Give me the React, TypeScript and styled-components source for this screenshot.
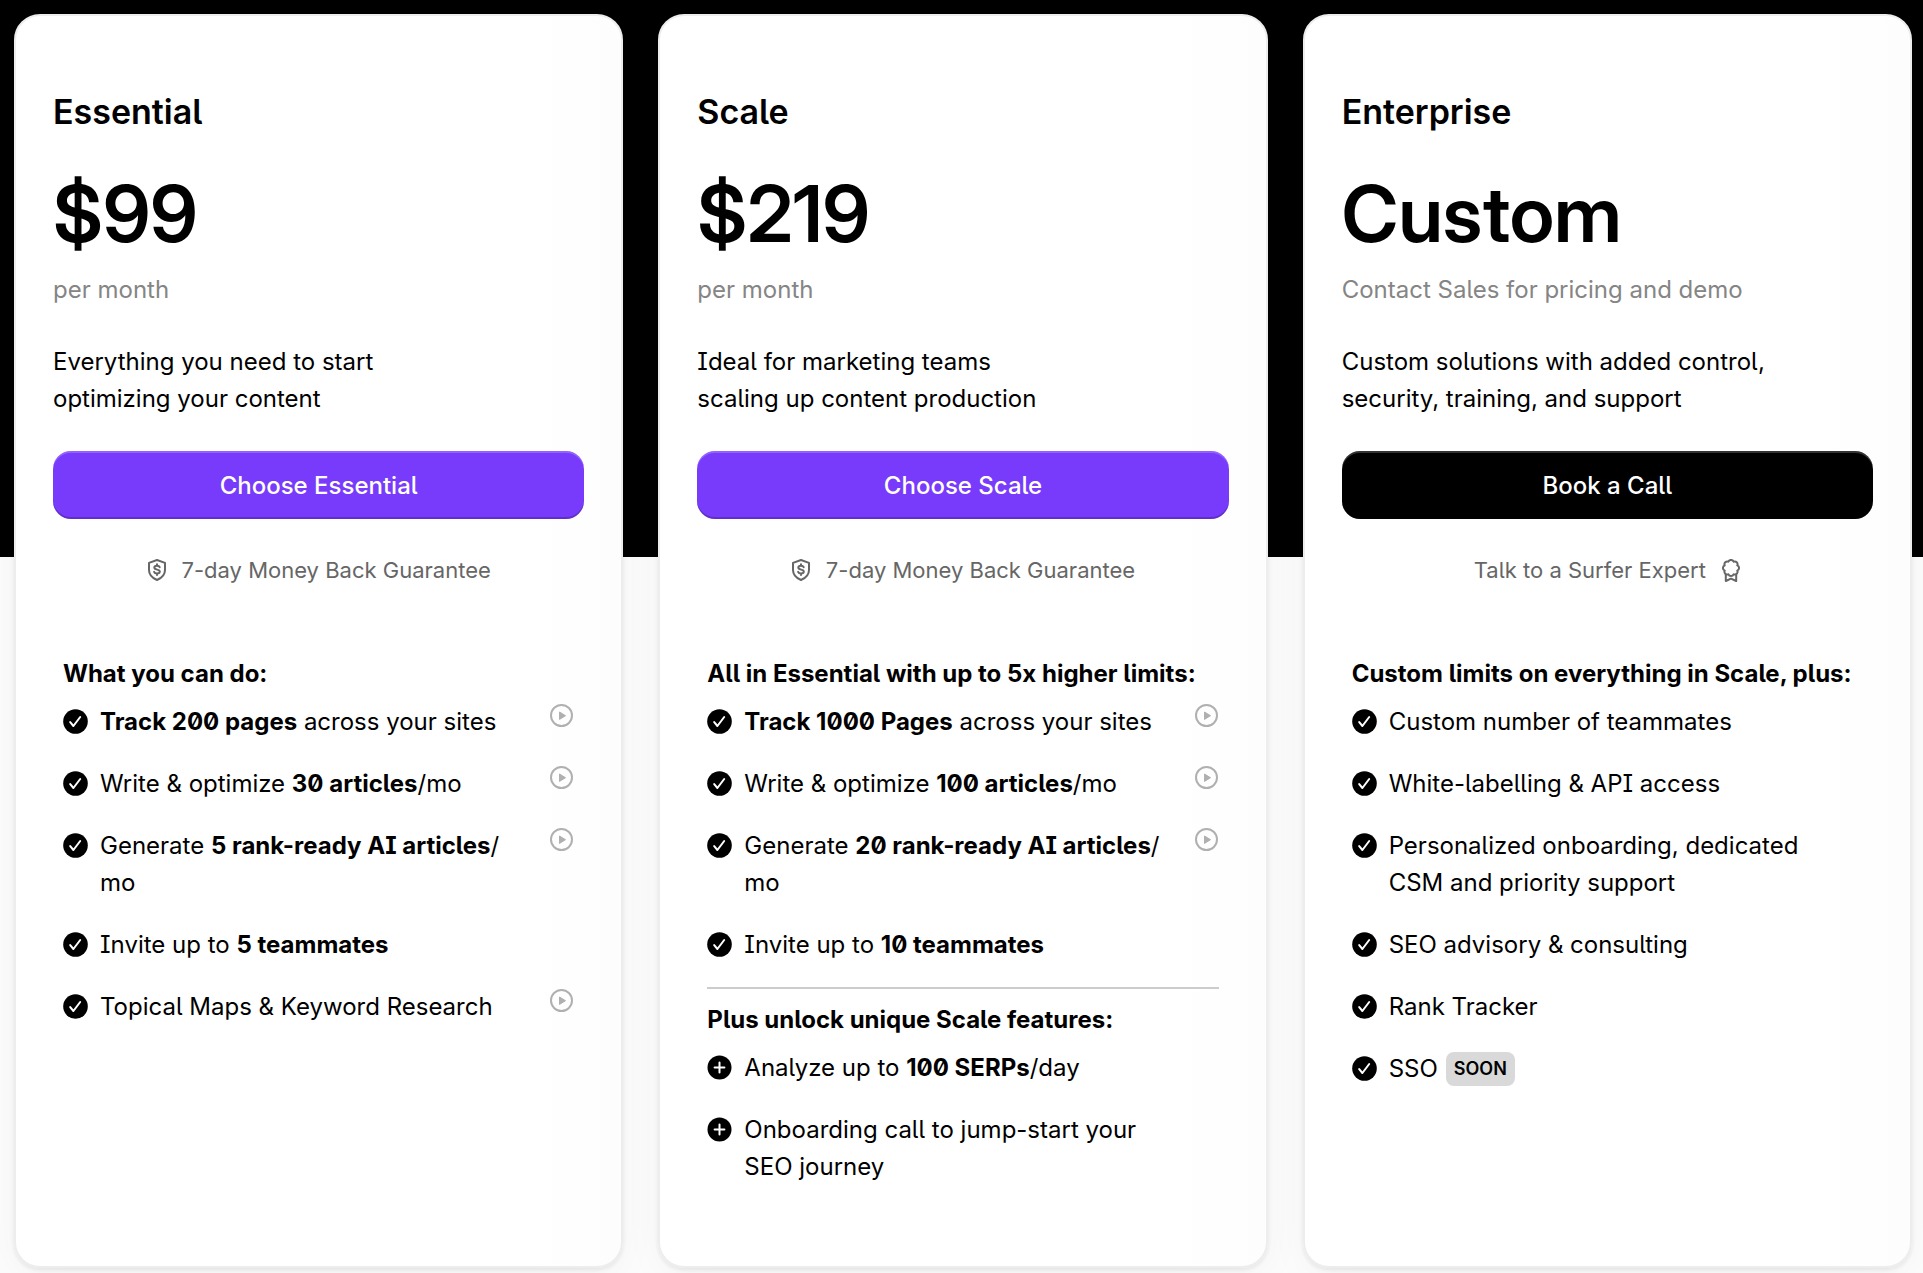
import React from "react";
import styled, { createGlobalStyle } from "styled-components";

const GlobalStyle = createGlobalStyle`
  *, *::before, *::after {
    box-sizing: border-box;
  }

  body {
    margin: 0;
    color: #000;
    background: #fcfcfc;
    font-family: Inter, "Noto Sans", sans-serif;
    font-size: 24px;
    line-height: 37px;
    font-feature-settings: "ss02";
  }

  h2, h3, p, ul {
    margin: 0;
    padding: 0;
  }
`;

const Page = styled.main`
  display: grid;
  grid-template-columns: repeat(3, minmax(0, 1fr));
  gap: 35px;
  min-height: 100vh;
  padding: 14px 11px 5px 14px;
  background: linear-gradient(#000 557px, #fcfcfc 557px);
`;

const Card = styled.article`
  display: flex;
  flex-direction: column;
  padding: 75px 37px 48px;
  border: 2px solid #ededed;
  border-radius: 26px;
  background: linear-gradient(90deg, #fff 85%, #fdfdfd);
  box-shadow:
    0 2px 4px rgba(0, 0, 0, 0.08),
    0 8px 40px rgba(0, 0, 0, 0.04);
`;

const PlanName = styled.h2`
  font-size: 34px;
  line-height: 42px;
  font-weight: 600;
`;

const Price = styled.p`
  margin-top: 41px;
  font-family: "Inter Display", Inter, "Noto Sans", sans-serif;
  font-size: 78px;
  line-height: 80px;
  font-weight: 600;
`;

const Period = styled.p`
  margin-top: 17px;
  color: #858585;
`;

const Summary = styled.p`
  margin-top: 35px;
  white-space: pre-line;
`;

const ActionButton = styled.button<{ $dark?: boolean }>`
  margin-top: 34px;
  height: 68px;
  border: 0;
  border-radius: 18px;
  color: #fff;
  background: ${(p) => (p.$dark ? "#000" : "#783afb")};
  box-shadow:
    inset 0 2px 0 rgba(255, 255, 255, 0.2),
    inset 0 -2px 0 rgba(0, 0, 0, 0.2);
  font: inherit;
  font-weight: 500;
  font-feature-settings: inherit;
  cursor: pointer;
`;

const Note = styled.p`
  display: flex;
  justify-content: center;
  align-items: center;
  gap: 15px;
  margin-top: 35px;
  color: #666;
  font-size: 22px;
  line-height: 32px;
`;

const NoteLink = styled.a`
  display: flex;
  align-items: center;
  gap: 15px;
  color: inherit;
  text-decoration: none;
`;

const Features = styled.div`
  margin-top: 69px;
  padding: 0 10px;
`;

const FeatureHeading = styled.h3`
  font-size: 24px;
  line-height: 37px;
  font-weight: 700;
  white-space: nowrap;
`;

const FeatureList = styled.ul`
  display: grid;
  gap: 25px;
  margin-top: 11px;
  list-style: none;
`;

const Feature = styled.li`
  display: grid;
  grid-template-columns: 25px minmax(0, 1fr) 24px;
  column-gap: 12px;
  align-items: start;
`;

const Marker = styled.svg`
  width: 25px;
  height: 25px;
  margin-top: 6px;
`;

const FeatureText = styled.div`
  padding-right: 12px;

  b {
    font-weight: 700;
  }
`;

const PlayButton = styled.button`
  display: flex;
  width: 24px;
  height: 24px;
  margin-top: 1px;
  padding: 0;
  border: 0;
  background: none;
  color: #b0b0b0;
  cursor: pointer;
`;

const Divider = styled.hr`
  height: 2px;
  margin: 24px 0 12px;
  border: 0;
  background: #ccc;
`;

const Tagged = styled.span`
  display: flex;
  align-items: center;
  gap: 8px;
  height: 37px;
`;

const Tag = styled.span`
  padding: 0 8px;
  border-radius: 8px;
  background: #d9d9d9;
  font-size: 18px;
  line-height: 34px;
  font-weight: 600;
`;

const CheckMarker = () => (
  <Marker viewBox="0 0 25 25" aria-hidden="true">
    <circle cx="12.5" cy="12.5" r="12.3" />
    <path d="M7.2 13.1 10.4 17 17.2 8" fill="none" stroke="#fff" strokeWidth="2" strokeLinecap="round" strokeLinejoin="round" />
  </Marker>
);

const PlusMarker = () => (
  <Marker viewBox="0 0 25 25" aria-hidden="true">
    <circle cx="12.5" cy="12.5" r="12" />
    <path d="M12.5 7.6v9.8M7.6 12.5h9.8" stroke="#fff" strokeWidth="2" strokeLinecap="round" />
  </Marker>
);

const PlayIcon = () => (
  <svg width="23" height="23" viewBox="0 0 23 23" aria-hidden="true">
    <circle cx="11.5" cy="11.5" r="10.5" fill="none" stroke="currentColor" strokeWidth="2" />
    <path d="M9.5 8v7.4l6-3.7z" fill="currentColor" stroke="currentColor" strokeLinejoin="round" />
  </svg>
);

const ShieldDollarIcon = () => (
  <svg width="20" height="22" viewBox="0 0 20 22" fill="none" stroke="currentColor" strokeWidth="2" strokeLinecap="round" strokeLinejoin="round" aria-hidden="true">
    <path d="M10 1 18 3.9V11c0 4.6-3 7.9-8 10-5-2.1-8-5.4-8-10V3.9z" />
    <path d="M12.7 8.2c-.4-1-1.3-1.5-2.7-1.5-1.6 0-2.7.7-2.7 1.9 0 2.9 5.5 1.2 5.5 4 0 1.2-1.2 1.9-2.8 1.9-1.4 0-2.5-.6-2.9-1.6M10 5.3v1.2M10 14.7v1.3" />
  </svg>
);

const RosetteIcon = () => (
  <svg width="20" height="23" viewBox="0 0 20 23" fill="none" stroke="currentColor" strokeWidth="2" strokeLinecap="round" strokeLinejoin="round" aria-hidden="true">
    <path d="M12.6 2.7A2.8 2.8 0 0 1 16.3 6.4A2.8 2.8 0 0 1 16.3 11.6A2.8 2.8 0 0 1 12.6 15.3A2.8 2.8 0 0 1 7.4 15.3A2.8 2.8 0 0 1 3.7 11.6A2.8 2.8 0 0 1 3.7 6.4A2.8 2.8 0 0 1 7.4 2.7A2.8 2.8 0 0 1 12.6 2.7z" />
    <path d="M4.8 15.5V22L10 19.6 15.2 22V15.5" />
  </svg>
);

type Item = { text: React.ReactNode; video?: string };
type Group = { heading: string; marker?: "check" | "plus"; items: Item[] };
type Plan = {
  name: string;
  price: string;
  period: string;
  summary: string;
  action: string;
  dark?: boolean;
  groups: Group[];
};

const plans: Plan[] = [
  {
    name: "Essential",
    price: "$99",
    period: "per month",
    summary: "Everything you need to start\noptimizing your content",
    action: "Choose Essential",
    groups: [
      {
        heading: "What you can do:",
        items: [
          { text: <><b>Track 200 pages</b> across your sites</>, video: "page tracking" },
          { text: <>Write &amp; optimize <b>30 articles</b>/mo</>, video: "writing articles" },
          { text: <>Generate <b>5 rank-ready AI articles</b>/<wbr />mo</>, video: "AI articles" },
          { text: <>Invite up to <b>5 teammates</b></> },
          { text: "Topical Maps & Keyword Research", video: "keyword research" },
        ],
      },
    ],
  },
  {
    name: "Scale",
    price: "$219",
    period: "per month",
    summary: "Ideal for marketing teams\nscaling up content production",
    action: "Choose Scale",
    groups: [
      {
        heading: "All in Essential with up to 5x higher limits:",
        items: [
          { text: <><b>Track 1000 Pages</b> across your sites</>, video: "page tracking" },
          { text: <>Write &amp; optimize <b>100 articles</b>/mo</>, video: "writing articles" },
          { text: <>Generate <b>20 rank-ready AI articles</b>/<wbr />mo</>, video: "AI articles" },
          { text: <>Invite up to <b>10 teammates</b></> },
        ],
      },
      {
        heading: "Plus unlock unique Scale features:",
        marker: "plus",
        items: [
          { text: <>Analyze up to <b>100 SERPs</b>/day</> },
          { text: "Onboarding call to jump-start your SEO journey" },
        ],
      },
    ],
  },
  {
    name: "Enterprise",
    price: "Custom",
    period: "Contact Sales for pricing and demo",
    summary: "Custom solutions with added control,\nsecurity, training, and support",
    action: "Book a Call",
    dark: true,
    groups: [
      {
        heading: "Custom limits on everything in Scale, plus:",
        items: [
          { text: "Custom number of teammates" },
          { text: "White-labelling & API access" },
          { text: "Personalized onboarding, dedicated CSM and priority support" },
          { text: "SEO advisory & consulting" },
          { text: "Rank Tracker" },
          { text: <Tagged>SSO <Tag>SOON</Tag></Tagged> },
        ],
      },
    ],
  },
];

const PlanCard = ({ plan }: { plan: Plan }) => (
  <Card>
    <PlanName>{plan.name}</PlanName>
    <Price>{plan.price}</Price>
    <Period>{plan.period}</Period>
    <Summary>{plan.summary}</Summary>
    <ActionButton type="button" $dark={plan.dark}>{plan.action}</ActionButton>
    {plan.dark ? (
      <Note>
        <NoteLink href="#expert">Talk to a Surfer Expert <RosetteIcon /></NoteLink>
      </Note>
    ) : (
      <Note><ShieldDollarIcon /> 7-day Money Back Guarantee</Note>
    )}
    <Features>
      {plan.groups.map((group, index) => (
        <React.Fragment key={group.heading}>
          {index > 0 && <Divider />}
          <FeatureHeading>{group.heading}</FeatureHeading>
          <FeatureList>
            {group.items.map((item, i) => (
              <Feature key={i}>
                {group.marker === "plus" ? <PlusMarker /> : <CheckMarker />}
                <FeatureText>{item.text}</FeatureText>
                {item.video && (
                  <PlayButton type="button" aria-label={`Play video about ${item.video}`}>
                    <PlayIcon />
                  </PlayButton>
                )}
              </Feature>
            ))}
          </FeatureList>
        </React.Fragment>
      ))}
    </Features>
  </Card>
);

export default function App() {
  return (
    <>
      <GlobalStyle />
      <Page>
        {plans.map((plan) => (
          <PlanCard key={plan.name} plan={plan} />
        ))}
      </Page>
    </>
  );
}
